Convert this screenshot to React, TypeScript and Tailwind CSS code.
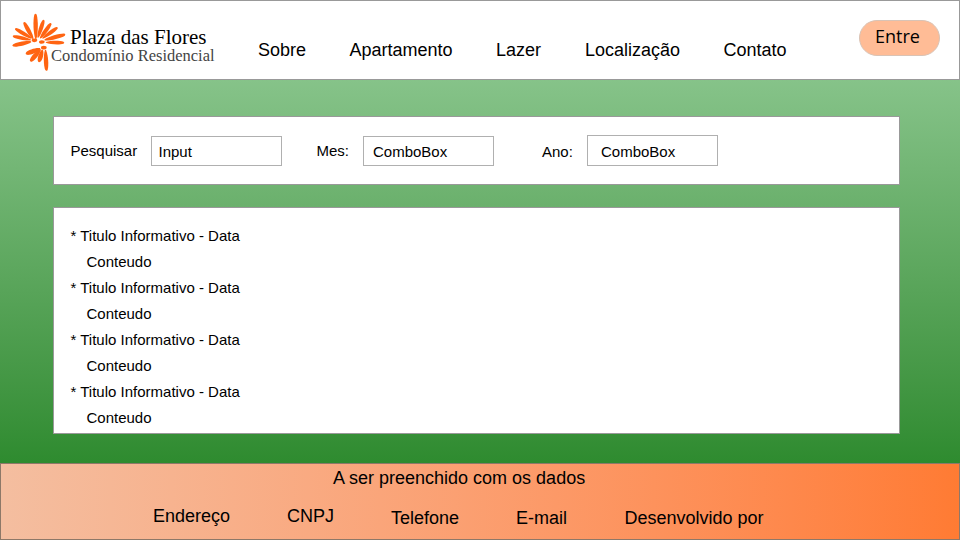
import React from "react";

// Petals of the flower mark: inner point, outer tip and half width.
const petals = [
  [107, 117, 106, 41, 6.5],
  [99, 117, 71, 66, 6],
  [94, 115, 44, 85, 6],
  [92, 120, 37, 108, 5.5],
  [93, 125, 36, 137, 6],
  [113, 113, 131, 59, 6],
  [120, 115, 153, 69, 6],
  [127, 115, 173, 82, 5.5],
  [133, 120, 196, 103, 6],
  [137, 127, 193, 128, 5.5],
  [120, 146, 76, 162, 7],
  [121, 148, 90, 185, 7],
  [127, 150, 116, 187, 7],
  [136, 150, 139, 213, 6.5],
];

function Flower() {
  return (
    <svg viewBox="30 36 170 180" className="h-[60px] w-[57px] shrink-0 fill-[#ff6412]">
      {petals.map(([x1, y1, x2, y2, w], i) => {
        const len = Math.hypot(x2 - x1, y2 - y1);
        const angle = (Math.atan2(y2 - y1, x2 - x1) * 180) / Math.PI;
        return (
          <path
            key={i}
            transform={`translate(${x1} ${y1}) rotate(${angle})`}
            d={`M0 ${-w * 0.25}C${len * 0.25} ${-w * 1.15} ${len * 0.75} ${-w * 1.25} ${len - 3} ${-w * 0.55}Q${len + 2} 0 ${len - 3} ${w * 0.55}C${len * 0.75} ${w * 1.25} ${len * 0.25} ${w * 1.15} 0 ${w * 0.25}Z`}
          />
        );
      })}
      <ellipse cx="103" cy="121" rx="8.5" ry="5.5" />
      <ellipse cx="125" cy="126" rx="8.5" ry="5.5" />
      <ellipse cx="131" cy="143" rx="8.5" ry="5.5" />
    </svg>
  );
}

function Header() {
  return (
    <header className="flex h-20 border border-[#999] bg-white">
      <div className="flex w-[257px] pl-[9px] pt-[11px]">
        <Flower />
        <div className="-ml-4 whitespace-nowrap pt-[14px] font-['Liberation_Serif',serif]">
          <div className="pl-[19px] text-[21px] leading-[22px] text-black">Plaza das Flores</div>
          <div className="-mt-px text-[16.5px] leading-[18px] text-[#444]">Condomínio Residencial</div>
        </div>
      </div>
      <nav className="flex pt-[39px] text-lg leading-5">
        <a className="w-[91.5px]">Sobre</a>
        <a className="w-[146.5px]">Apartamento</a>
        <a className="w-[89px]">Lazer</a>
        <a className="w-[138.5px]">Localização</a>
        <a>Contato</a>
      </nav>
      <button className="ml-auto mr-[19px] mt-[19px] flex h-9 w-[81px] justify-center rounded-full border border-[#d9c3b5] bg-[#ffbc96] pr-[4px] pt-[2px] font-['Open_Sans',sans-serif] text-[18px] leading-[26px]">
        Entre
      </button>
    </header>
  );
}

function SearchBar() {
  return (
    <section className="flex h-[69px] border border-[#999] bg-white pl-[16.5px]">
      <span className="w-[80.5px] pt-[25px]">Pesquisar</span>
      <div className="mt-[19px] h-[30px] w-[131px] border border-[#b0b0b0] pl-[6.5px] pt-[6px]">Input</div>
      <span className="ml-[34.5px] w-[46.5px] pt-[25px]">Mes:</span>
      <div className="mt-[19px] h-[30px] w-[131px] border border-[#b0b0b0] pl-[9px] pt-[6px]">ComboBox</div>
      <span className="ml-[48px] w-[45px] pt-[26px]">Ano:</span>
      <div className="mt-[18px] h-[31px] w-[131px] border border-[#b0b0b0] pl-[13px] pt-[7px]">ComboBox</div>
    </section>
  );
}

function NewsList() {
  return (
    <section className="mt-[22px] h-[227px] border border-[#999] bg-white pl-[16.5px] pt-[15px] leading-[26px]">
      {[0, 1, 2, 3].map((i) => (
        <article key={i}>
          <h2 className="whitespace-pre">* Titulo Informativo - Data</h2>
          <p className="pl-4">Conteudo</p>
        </article>
      ))}
    </section>
  );
}

function Footer() {
  return (
    <footer className="h-[77px] border border-[#8d7868] bg-linear-to-r from-[#f4bea0] to-[#ff7b33] text-lg leading-5">
      <p className="pl-[332px] pt-[4px]">A ser preenchido com os dados</p>
      <div className="flex pl-[152px] pt-[18px]">
        <span className="w-[134px]">Endereço</span>
        <span className="w-[104px]">CNPJ</span>
        <span className="w-[125px] pt-[2px]">Telefone</span>
        <span className="w-[108.5px] pt-[2px]">E-mail</span>
        <span className="pt-[2px]">Desenvolvido por</span>
      </div>
    </footer>
  );
}

export default function App() {
  return (
    <div className="flex h-[540px] w-[960px] flex-col overflow-hidden font-['Liberation_Sans',Arial,sans-serif] text-black">
      <Header />
      <main className="h-[383px] bg-linear-to-b from-[#86c389] to-[#2e8b2f] pl-[53px] pr-[60px] pt-[36px] text-[15px] leading-[17px]">
        <SearchBar />
        <NewsList />
      </main>
      <Footer />
    </div>
  );
}
